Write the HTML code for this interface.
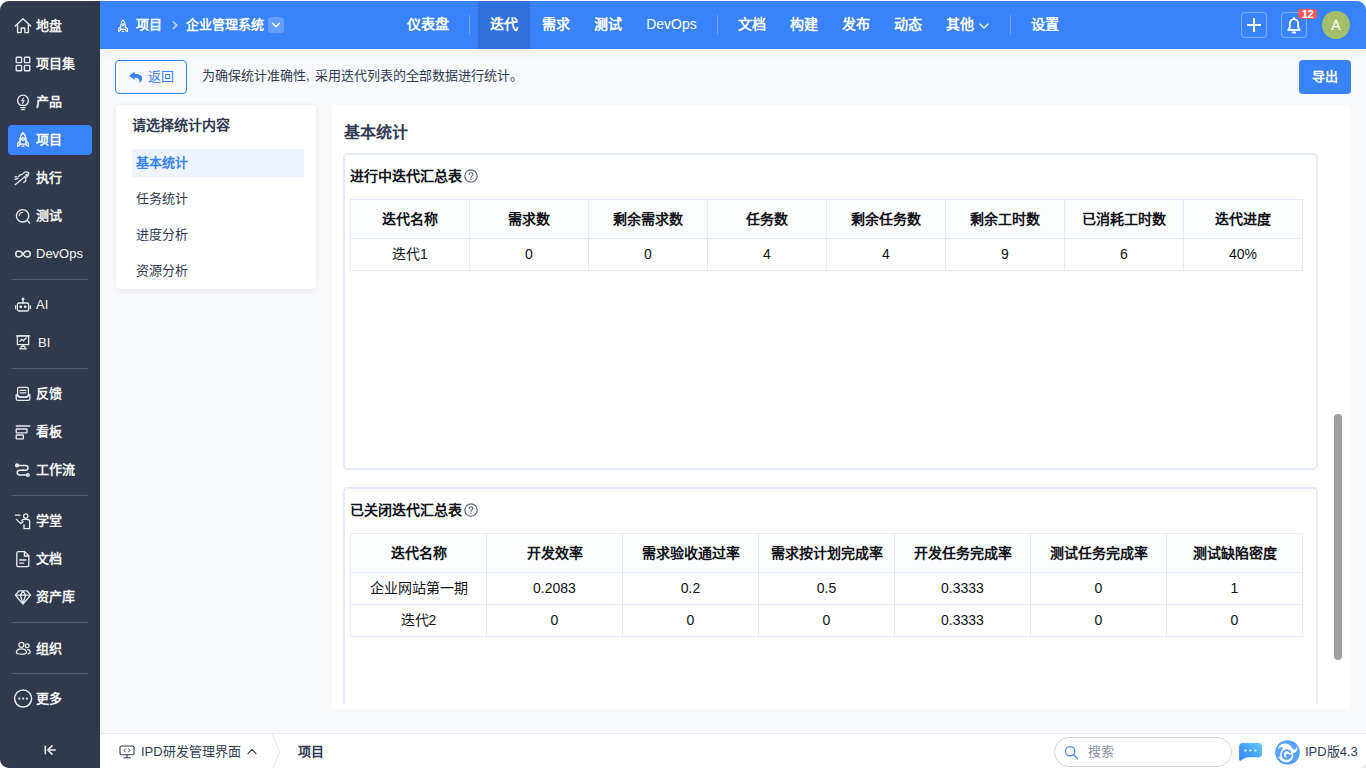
<!DOCTYPE html>
<html lang="zh-CN">
<head>
<meta charset="utf-8">
<title>项目 - 迭代统计</title>
<style>
*{box-sizing:border-box;margin:0;padding:0}
html,body{width:1366px;height:768px;overflow:hidden;background:#fff}
body{font-family:"Liberation Sans",sans-serif;font-size:13px;color:#313c52;position:relative}
.abs{position:absolute}
.t{position:absolute;white-space:nowrap;line-height:20px;height:20px}
.b{font-weight:bold}
.n{font-weight:normal}
#app{position:absolute;left:0;top:1px;width:1366px;height:767px;background:#f8f9fb;border-radius:9px 9px 0 9px;overflow:hidden}
/* sidebar */
#side{position:absolute;left:0;top:0;width:100px;height:767px;background:#313a4c}
#side .it{position:absolute;margin-top:1px;left:8px;width:84px;height:30px;border-radius:4px;color:#fff}
#side .it.act{background:#3883fa}
#side .it svg{position:absolute;left:6px;top:7px;width:18px;height:16px;overflow:visible}
#side .it span{position:absolute;left:28px;top:5px;line-height:20px;font-size:13px;font-weight:bold;white-space:nowrap;color:#f4f5f7}
#side .it span.n{font-weight:normal}
#side .dv{position:absolute;left:12px;width:76px;height:1px;background:#525a6b}
/* header */
#hdr{position:absolute;left:100px;top:0;width:1266px;height:48px;background:#3883fa;color:#fff}
#hdr .nv{position:absolute;top:0;height:48px;line-height:46px;font-size:14px;font-weight:bold;text-align:center;white-space:nowrap;color:#fff}
#hdr .nv.act{background:#3072dd}
#hdr .sep{position:absolute;top:14px;width:1px;height:20px;background:rgba(255,255,255,.28)}

/* main */
#hdr{box-shadow:0 4px 12px rgba(20,30,60,.045)}
.btn{position:absolute;height:34px;border-radius:4px;font-size:13px;white-space:nowrap}
#lp{position:absolute;left:116px;top:104px;width:200px;height:184px;background:#fff;border-radius:4px;box-shadow:0 1px 5px rgba(40,55,90,.10)}
#lp .li{position:absolute;left:16px;width:172px;height:28px;line-height:27px;padding-left:4px;font-size:13px;color:#313c52;white-space:nowrap}
#lp .li.act{background:#eef4ff;color:#3883fa;font-weight:bold}
#mp{position:absolute;left:332px;top:104px;width:1018px;height:604px;background:#fff;overflow:hidden}
#sc{position:absolute;left:0;top:0;width:1018px;height:599px;overflow:hidden}
.box{position:absolute;left:11px;width:975px;border:2px solid #e4eaf8;border-radius:5px;background:#fff}
.box .ttl{position:absolute;left:5px;top:11px;height:20px;line-height:20px;font-size:14px;font-weight:bold;color:#0e1116;white-space:nowrap}
.box .q{position:absolute;top:14px;width:14px;height:14px}
table.tb{position:absolute;left:5px;top:44px;border-collapse:collapse;table-layout:fixed;font-size:14px;color:#101216}
table.tb th,table.tb td{border:1px solid #e4eaf8;text-align:center;padding:0;white-space:nowrap;overflow:hidden}
table.tb th{height:39px;background:#fcfdff;font-weight:bold;line-height:38px}
table.tb td{height:32px;line-height:31px}

/* footer */
#ft{position:absolute;left:100px;top:732px;width:1266px;height:35px;background:#fff;border-top:1px solid #e7e9f0;color:#313c52}
</style>
</head>
<body>
<div id="app">

<!-- ============ SIDEBAR ============ -->
<div id="side">
  <div class="it" style="top:9px">
    <svg viewBox="0 0 18 16" fill="none" stroke="#e9ebef" stroke-width="1.4" stroke-linejoin="round" stroke-linecap="round"><path d="M1.300 8 9 .8l7.700 7.200"/><path d="M3.600 6.600v8h3.600v-4.600h3.600v4.600h3.600v-8"/></svg>
    <span>地盘</span></div>
  <div class="it" style="top:47px">
    <svg viewBox="0 0 18 16" fill="none" stroke="#e9ebef" stroke-width="1.4"><rect x="2.2" y="1.2" width="5.4" height="5.4" rx=".8"/><rect x="10.4" y="1.2" width="5.4" height="5.4" rx=".8"/><rect x="2.2" y="9.4" width="5.4" height="5.4" rx=".8"/><rect x="10.4" y="9.4" width="5.4" height="5.4" rx=".8"/></svg>
    <span>项目集</span></div>
  <div class="it" style="top:85px">
    <svg viewBox="0 0 18 16" fill="none" stroke="#e9ebef" stroke-width="1.3" stroke-linecap="round" stroke-linejoin="round"><path d="M6.6 11.4C4.6 10.4 3.6 8.6 3.6 6.6a5.4 5.4 0 0 1 10.8 0c0 2-1 3.800-3 4.800z"/><path d="M6.800 13.600h4.400M7.600 15.600h2.800"/><path d="M9.600 4 7.800 6.800h2.400L8.400 9.400" stroke-width="1.100"/></svg>
    <span>产品</span></div>
  <div class="it act" style="top:123px">
    <svg viewBox="0 0 18 16" fill="none" stroke="#fff" stroke-width="1.3" stroke-linejoin="round" stroke-linecap="round"><path d="M9 .8C6.800 2.800 6 5.400 6 8v4.200h6V8c0-2.600-.8-5.200-3-7.200z"/><path d="M6 9 3.600 11.400v3.200L6 12.800M12 9l2.400 2.400v3.200L12 12.800"/><circle cx="9" cy="7" r="1.300"/><path d="M8 14.200h2"/></svg>
    <span style="color:#fff">项目</span></div>
  <div class="it" style="top:161px">
    <svg viewBox="0 0 18 16" fill="none" stroke="#e9ebef" stroke-width="1.3" stroke-linecap="round" stroke-linejoin="round"><path d="M1.400 14.600 11 6.400"/><path d="M9.200 3.200c1.600-1.400 4-1.600 5.600-.2-.2 2.200-1.600 4.200-3.800 5"/><path d="M8.400 4.400 6.200 4.800 4.600 6.600M11.800 8.800l-.2 2.200-1.800 1.400M1 9.400l3-1M1 6.800h2"/><circle cx="12.600" cy="5" r=".7"/></svg>
    <span>执行</span></div>
  <div class="it" style="top:199px">
    <svg viewBox="0 0 18 16" fill="none" stroke="#e9ebef" stroke-width="1.4" stroke-linecap="round"><circle cx="8.600" cy="7.800" r="6.200"/><path d="M13.200 12.400l2.400 2.600"/><path d="M5.200 7.800a3.400 3.400 0 0 1 3.400-3.400" stroke-width="1.100"/></svg>
    <span>测试</span></div>
  <div class="it" style="top:237px">
    <svg viewBox="0 0 18 16" fill="none" stroke="#e9ebef" stroke-width="1.500" stroke-linecap="round"><path d="M9 8C7.600 6 6.400 5 4.800 5a3 3 0 0 0 0 6C6.400 11 7.600 10 9 8s2.600-3 4.200-3a3 3 0 0 1 0 6C11.600 11 10.400 10 9 8z"/></svg>
    <span class="n">DevOps</span></div>
  <div class="dv" style="top:278px"></div>
  <div class="it" style="top:288px">
    <svg viewBox="0 0 18 16" fill="none" stroke="#e9ebef" stroke-width="1.300" stroke-linecap="round" stroke-linejoin="round"><rect x="3.400" y="6" width="11.200" height="8" rx="1.600"/><path d="M9 6V2.600"/><circle cx="9" cy="2" r=".8"/><path d="M1.600 9v2.600M16.400 9v2.600"/><circle cx="6.800" cy="9.800" r=".7" fill="#e9ebef"/><circle cx="11.200" cy="9.800" r=".7" fill="#e9ebef"/></svg>
    <span class="n">AI</span></div>
  <div class="it" style="top:326px">
    <svg style="top:6px" viewBox="0 0 18 16" fill="none" stroke="#e9ebef" stroke-width="1.300" stroke-linecap="round" stroke-linejoin="round"><path d="M2.400 1.800h13.200"/><rect x="3.400" y="1.800" width="11.200" height="8.800"/><path d="M6.400 14.800l1-2.400h3.200l1 2.400M5.600 14.800h6.800M9 10.600v1.800"/><path d="M5.800 7.400l2-2 1.600 1.400 2.800-2.800"/></svg>
    <span class="n" style="left:30px">BI</span></div>
  <div class="dv" style="top:367px"></div>
  <div class="it" style="top:377px">
    <svg viewBox="0 0 18 16" fill="none" stroke="#e9ebef" stroke-width="1.300" stroke-linejoin="round" stroke-linecap="round"><rect x="3.600" y="1.400" width="10.800" height="9.600" rx="1.400"/><path d="M2.200 8.600v4.200c0 .9.700 1.600 1.600 1.600h10.400c.9 0 1.600-.7 1.600-1.600V8.600"/><path d="M2.200 8.800l4.600 2.600h4.400l4.600-2.600"/><path d="M6.200 4.400h5.600M6.200 6.800h5.600"/></svg>
    <span>反馈</span></div>
  <div class="it" style="top:415px">
    <svg viewBox="0 0 18 16" fill="none" stroke="#e9ebef" stroke-width="1.300" stroke-linecap="round" stroke-linejoin="round"><path d="M2.200 2h13.600"/><rect x="2.200" y="5" width="10.800" height="3.800" rx=".6"/><rect x="2.200" y="11" width="7.200" height="3.800" rx=".6"/></svg>
    <span>看板</span></div>
  <div class="it" style="top:453px">
    <svg viewBox="0 0 18 16" fill="none" stroke="#e9ebef" stroke-width="1.500" stroke-linecap="round" stroke-linejoin="round"><path d="M2.400 3.400h9.200a2.400 2.400 0 0 1 0 4.800H5.600a2.400 2.400 0 0 0 0 4.800h6"/><circle cx="3" cy="3.400" r="1.300"/><circle cx="13.800" cy="13" r="1.300"/><path d="M8 8.200h2"/></svg>
    <span>工作流</span></div>
  <div class="dv" style="top:494px"></div>
  <div class="it" style="top:504px">
    <svg viewBox="0 0 18 16" fill="none" stroke="#e9ebef" stroke-width="1.300" stroke-linecap="round" stroke-linejoin="round"><circle cx="11.800" cy="3.100" r="2.200"/><path d="M1.600 2.200h4.400"/><path d="M2.400 6.400l4.400 4.200 2.400-1.800"/><path d="M7.800 8.200c.2-1.200 1-1.800 2.200-1.800h3.400c1.400 0 2.200.9 2.200 2.200v7H10v-4"/></svg>
    <span>学堂</span></div>
  <div class="it" style="top:542px">
    <svg viewBox="0 0 18 16" fill="none" stroke="#e9ebef" stroke-width="1.300" stroke-linejoin="round" stroke-linecap="round"><path d="M4.200 .6h6.400l4.200 4.200v9.400c0 .8-.6 1.400-1.400 1.400H4.200c-.8 0-1.400-.6-1.400-1.400V2c0-.8.6-1.400 1.400-1.400z"/><path d="M10.400 .8v4.200h4.200M5.800 9h6M5.800 12.200h3.800"/></svg>
    <span>文档</span></div>
  <div class="it" style="top:580px">
    <svg viewBox="0 0 18 16" fill="none" stroke="#e9ebef" stroke-width="1.300" stroke-linejoin="round" stroke-linecap="round"><path d="M5 1.800h8l3.600 4.400L9 15 1.400 6.200z"/><path d="M1.600 6.200h14.800M6.400 6.200 9 14.400l2.600-8.200M6.400 6.200 9 2l2.600 4.200"/></svg>
    <span>资产库</span></div>
  <div class="dv" style="top:621px"></div>
  <div class="it" style="top:632px">
    <svg viewBox="0 0 18 16" fill="none" stroke="#e9ebef" stroke-width="1.300" stroke-linecap="round" stroke-linejoin="round"><circle cx="7.400" cy="3.800" r="2.500"/><path d="M2.400 11.400c0-2.200 2-3.600 5-3.600s5 1.400 5 3.600c0 1.200-2.200 1.800-5 1.800s-5-.6-5-1.800z"/><circle cx="13.200" cy="4.800" r="1.900"/><path d="M13.600 8.600c1.600.2 2.600 1.200 2.600 2.600 0 .9-.8 1.400-2.200 1.600"/></svg>
    <span>组织</span></div>
  <div class="dv" style="top:672px"></div>
  <div class="it" style="top:682px">
    <svg viewBox="0 0 18 16" fill="none" stroke="#e9ebef" stroke-width="1.500"><circle cx="9.100" cy="7.600" r="8.500"/><circle cx="5.300" cy="7.600" r="1.100" fill="#e9ebef" stroke="none"/><circle cx="9.100" cy="7.600" r="1.100" fill="#e9ebef" stroke="none"/><circle cx="12.900" cy="7.600" r="1.100" fill="#e9ebef" stroke="none"/></svg>
    <span>更多</span></div>
  <svg class="abs" style="left:43px;top:743px;width:14px;height:12px" viewBox="0 0 14 12" fill="none" stroke="#e9ebef" stroke-width="1.600" stroke-linecap="round" stroke-linejoin="round"><path d="M2.300 2.200v7.600M12.300 6H4.800M9 1.900 4.800 6 9 10.100"/></svg>
</div>

<!-- ============ HEADER ============ -->
<div id="hdr">

  <!-- breadcrumb -->
  <svg class="abs" style="left:17px;top:18px;width:12px;height:14px;overflow:visible" viewBox="0 0 13 15" fill="none" stroke="#fff" stroke-width="1.200" stroke-linejoin="round" stroke-linecap="round"><path d="M6.500 .8C4.700 2.600 4 4.800 4 7.200v4h5v-4c0-2.400-.7-4.600-2.500-6.400z"/><path d="M4 8.200 1.800 10.400v3L4 11.800M9 8.200l2.200 2.200v3L9 11.800"/><circle cx="6.500" cy="6.200" r="1.100"/><path d="M5.600 13.200h1.800"/></svg>
  <div class="t b" style="left:36px;top:14px;font-size:13px;color:#fff">项目</div>
  <svg class="abs" style="left:71px;top:18px;width:8px;height:12px" viewBox="0 0 8 12" fill="none" stroke="rgba(255,255,255,.6)" stroke-width="1.700" stroke-linecap="round" stroke-linejoin="round"><path d="M2.400 2.800l3.300 3.400-3.300 3.400"/></svg>
  <div class="t b" style="left:86px;top:14px;font-size:13px;color:#fff">企业管理系统</div>
  <div class="abs" style="left:168px;top:16px;width:16px;height:16px;border-radius:3px;background:rgba(255,255,255,.22)"></div>
  <svg class="abs" style="left:171px;top:20px;width:10px;height:8px" viewBox="0 0 10 8" fill="none" stroke="#fff" stroke-width="1.300" stroke-linecap="round" stroke-linejoin="round"><path d="M1.500 2.200 5 5.800 8.500 2.200"/></svg>
  <!-- nav -->
  <div class="nv" style="left:295px;width:66px">仪表盘</div>
  <div class="sep" style="left:369px"></div>
  <div class="nv act" style="left:378px;width:52px">迭代</div>
  <div class="nv" style="left:430px;width:52px">需求</div>
  <div class="nv" style="left:482px;width:52px">测试</div>
  <div class="nv n" style="left:534px;width:75px;font-weight:normal">DevOps</div>
  <div class="sep" style="left:617px"></div>
  <div class="nv" style="left:626px;width:52px">文档</div>
  <div class="nv" style="left:678px;width:52px">构建</div>
  <div class="nv" style="left:730px;width:52px">发布</div>
  <div class="nv" style="left:782px;width:52px">动态</div>
  <div class="nv" style="left:834px;width:52px">其他</div>
  <svg class="abs" style="left:879px;top:21px;width:10px;height:8px" viewBox="0 0 10 8" fill="none" stroke="#fff" stroke-width="1.200" stroke-linecap="round" stroke-linejoin="round"><path d="M1 2l4 4 4-4"/></svg>
  <div class="sep" style="left:910px"></div>
  <div class="nv" style="left:919px;width:52px">设置</div>
  <!-- right tools -->
  <div class="abs" style="left:1141px;top:11px;width:26px;height:26px;border:1px solid rgba(255,255,255,.35);border-radius:4px"></div>
  <svg class="abs" style="left:1146px;top:16px;width:16px;height:16px" viewBox="0 0 16 16" fill="none" stroke="#fff" stroke-width="2" stroke-linecap="butt"><path d="M8 1v14M1 8h14"/></svg>
  <div class="abs" style="left:1181px;top:11px;width:26px;height:26px;border:1px solid rgba(255,255,255,.35);border-radius:4px"></div>
  <svg class="abs" style="left:1186px;top:16px;width:16px;height:18px" viewBox="0 0 16 18" fill="none" stroke="#fff" stroke-width="1.800" stroke-linejoin="round" stroke-linecap="round"><path d="M8 2.200c-2.600 0-4.200 2-4.200 4.600v3.400L2.200 13h11.600l-1.600-2.800V6.800c0-2.600-1.600-4.600-4.200-4.600z"/><path d="M6.800 15.600h2.400" stroke-width="2"/><path d="M8 1v1"/></svg>
  <div class="abs" style="left:1198px;top:8px;width:19px;height:10px;border-radius:3px;background:#fb5a5c;color:#fff;font-size:11px;font-weight:bold;line-height:10px;text-align:center;letter-spacing:-.3px">12</div>
  <div class="abs" style="left:1222px;top:10px;width:28px;height:28px;border-radius:50%;background:#a3bf6c;color:#fff;font-size:14px;line-height:28px;text-align:center">A</div>

</div>


<!-- ============ TOOLBAR ============ -->
<div class="btn" style="left:115px;top:59px;width:72px;border:1px solid #3883fa;color:#3883fa">
  <svg class="abs" style="left:13px;top:10px;width:14px;height:12px" viewBox="0 0 14 12"><path d="M5.600 .4.300 4.700l5.300 4.300V6.400c2.900 0 4.700 1.300 4.900 3.600.1.800-.1 1.400-.4 2 1.900-1 3.100-2.800 3.100-4.800 0-2.600-2.400-4.300-7.600-4.300z" fill="#3883fa"/></svg>
  <span class="t" style="left:32px;top:6px;font-size:13px">返回</span>
</div>
<div class="t" style="left:202px;top:65px;font-size:13px;color:#313c52;word-spacing:1.5px">为确保统计准确性, 采用迭代列表的全部数据进行统计。</div>
<div class="btn" style="left:1299px;top:59px;width:52px;background:#3883fa;color:#fff;font-weight:bold;text-align:center;line-height:33px">导出</div>

<!-- ============ LEFT PANEL ============ -->
<div id="lp">
  <div class="t b" style="left:16px;top:10px;font-size:14px;color:#313c52">请选择统计内容</div>
  <div class="li act" style="top:44px">基本统计</div>
  <div class="li" style="top:80px">任务统计</div>
  <div class="li" style="top:116px">进度分析</div>
  <div class="li" style="top:152px">资源分析</div>
</div>

<!-- ============ MAIN PANEL ============ -->
<div id="mp">
 <div id="sc">
  <div class="t b" style="left:12px;top:16px;height:24px;line-height:24px;font-size:16px;color:#313c52">基本统计</div>

  <div class="box" style="top:48px;height:317px">
    <div class="ttl">进行中迭代汇总表</div>
    <svg class="q" style="left:119px" viewBox="0 0 14 14" fill="none" stroke="#5b6270" stroke-width="1.150"><circle cx="7" cy="7" r="6.200"/><path d="M5.100 5.500c0-1.100.8-1.800 1.900-1.800s1.900.7 1.900 1.700c0 1.400-1.900 1.500-1.900 2.900" stroke-linecap="round"/><circle cx="7" cy="10.300" r=".7" fill="#5b6270" stroke="none"/></svg>
    <table class="tb" style="width:953px">
      <tr><th>迭代名称</th><th>需求数</th><th>剩余需求数</th><th>任务数</th><th>剩余任务数</th><th>剩余工时数</th><th>已消耗工时数</th><th>迭代进度</th></tr>
      <tr><td>迭代1</td><td>0</td><td>0</td><td>4</td><td>4</td><td>9</td><td>6</td><td>40%</td></tr>
    </table>
  </div>

  <div class="box" style="top:382px;height:330px">
    <div class="ttl">已关闭迭代汇总表</div>
    <svg class="q" style="left:119px" viewBox="0 0 14 14" fill="none" stroke="#5b6270" stroke-width="1.150"><circle cx="7" cy="7" r="6.200"/><path d="M5.100 5.500c0-1.100.8-1.800 1.900-1.800s1.900.7 1.900 1.700c0 1.400-1.900 1.500-1.900 2.900" stroke-linecap="round"/><circle cx="7" cy="10.300" r=".7" fill="#5b6270" stroke="none"/></svg>
    <table class="tb" style="width:953px">
      <tr><th>迭代名称</th><th>开发效率</th><th>需求验收通过率</th><th>需求按计划完成率</th><th>开发任务完成率</th><th>测试任务完成率</th><th>测试缺陷密度</th></tr>
      <tr><td>企业网站第一期</td><td>0.2083</td><td>0.2</td><td>0.5</td><td>0.3333</td><td>0</td><td>1</td></tr>
      <tr><td>迭代2</td><td>0</td><td>0</td><td>0</td><td>0.3333</td><td>0</td><td>0</td></tr>
    </table>
  </div>
 </div>
 <div class="abs" style="left:1002px;top:309px;width:8px;height:246px;border-radius:4px;background:#a0a0a0"></div>
</div>



<!-- ============ FOOTER ============ -->
<div id="ft">
  <svg class="abs" style="left:19px;top:11px;width:16px;height:14px;overflow:visible" viewBox="0 0 16 14" fill="none" stroke="#313c52" stroke-width="1.100" stroke-linecap="round" stroke-linejoin="round"><rect x="1" y="1" width="14" height="8.800" rx="1.400"/><path d="M8 9.800v2.600M4.800 12.800h6.400"/><path d="M6.400 3.800 5 5.400l1.400 1.600M9.600 3.800 11 5.400 9.600 7" stroke-width="1"/></svg>
  <div class="t" style="left:41px;top:8px;font-size:13px">IPD研发管理界面</div>
  <svg class="abs" style="left:147px;top:14px;width:10px;height:7px" viewBox="0 0 10 7" fill="none" stroke="#313c52" stroke-width="1.200" stroke-linecap="round" stroke-linejoin="round"><path d="M1 5.600 5 1.400l4 4.200"/></svg>
  <svg class="abs" style="left:170px;top:0;width:12px;height:35px" viewBox="0 0 12 35" fill="none" stroke="#e3e6ee" stroke-width="1"><path d="M2 0 9.600 18 2 36"/></svg>
  <div class="t b" style="left:198px;top:8px;font-size:13px">项目</div>
  <!-- search -->
  <div class="abs" style="left:954px;top:3px;width:178px;height:30px;border:1px solid #ccd3ea;border-radius:15px;background:#fff"></div>
  <svg class="abs" style="left:964px;top:11px;width:15px;height:15px" viewBox="0 0 15 15" fill="none" stroke="#3883fa" stroke-width="1.250" stroke-linecap="round"><circle cx="6.200" cy="6.200" r="4.700"/><path d="M9.800 9.800l3.600 3.800"/></svg>
  <div class="t" style="left:988px;top:8px;font-size:13px;color:#8a909d">搜索</div>
  <!-- chat -->
  <svg class="abs" style="left:1138px;top:8px;width:25px;height:20px" viewBox="0 0 25 20"><defs><linearGradient id="cg" x1="0" y1="1" x2="1" y2="0"><stop offset="0" stop-color="#2f80ff"/><stop offset="1" stop-color="#62cbfa"/></linearGradient></defs><path d="M4.600 1h15.800A3.600 3.600 0 0 1 24 4.600v7A3.600 3.600 0 0 1 20.400 15.200H11c-3.400 0-6 1.600-8 3.200-.8.700-1.900.1-1.900-.9V4.600A3.600 3.600 0 0 1 4.600 1z" fill="url(#cg)"/><circle cx="7.400" cy="8.500" r="1.100" fill="#fff"/><circle cx="12.400" cy="8.500" r="1.100" fill="#fff"/><circle cx="17.500" cy="8.500" r="1.100" fill="#fff"/></svg>
  <!-- logo -->
  <svg class="abs" style="left:1175px;top:6px;width:25px;height:25px" viewBox="0 0 25 25"><circle cx="12.500" cy="12.500" r="12.300" fill="#57a0fb"/><path d="M3.400 9C3.800 6.600 5 4.900 7 4.200c2.400-.8 5-.7 7 .6 1.700 1.100 2.600 3 3.700 4.300.9 1 2.200 1.100 3 .4.600-.6.900-1.400 1-2.400.7 1.300.6 2.800-.2 3.900-.9 1.200-2.400 1.700-4 2 .5 1 .6 2.200.4 3.500-.5 3.200-3.100 5.500-6.600 5.500-3.300 0-6-1.800-7.600-5.200.8.200 1.500 0 1.900-.5-.3-1.300-.2-2.700.3-4 .5-1.500 1.500-2.500 2.100-3.600.3-.6.100-1.200-.5-1.500-.9-.4-2.100-.200-2.900.4-.5.400-.9.900-1.200 1.400z" fill="#fff" stroke="#fff" stroke-width=".5" stroke-linejoin="round"/><path d="M15.300 12.200A4.200 4.200 0 1 0 15.900 15.400" fill="none" stroke="#57a0fb" stroke-width="2.100" stroke-linecap="round"/><circle cx="12.900" cy="15.800" r="2" fill="#57a0fb"/><path d="M13.800 16.800 15.200 17.300" stroke="#57a0fb" stroke-width="1.800" stroke-linecap="round"/></svg>
  <div class="t" style="left:1205px;top:8px;font-size:13px">IPD版4.3</div>
  <div class="abs" style="right:0;bottom:0;width:7px;height:7px;background:#ececec"></div>
  <div class="abs" style="right:0;bottom:0;width:7px;height:7px;background:#fff;border-bottom-right-radius:7px"></div>
</div>


</div>
</body>
</html>
